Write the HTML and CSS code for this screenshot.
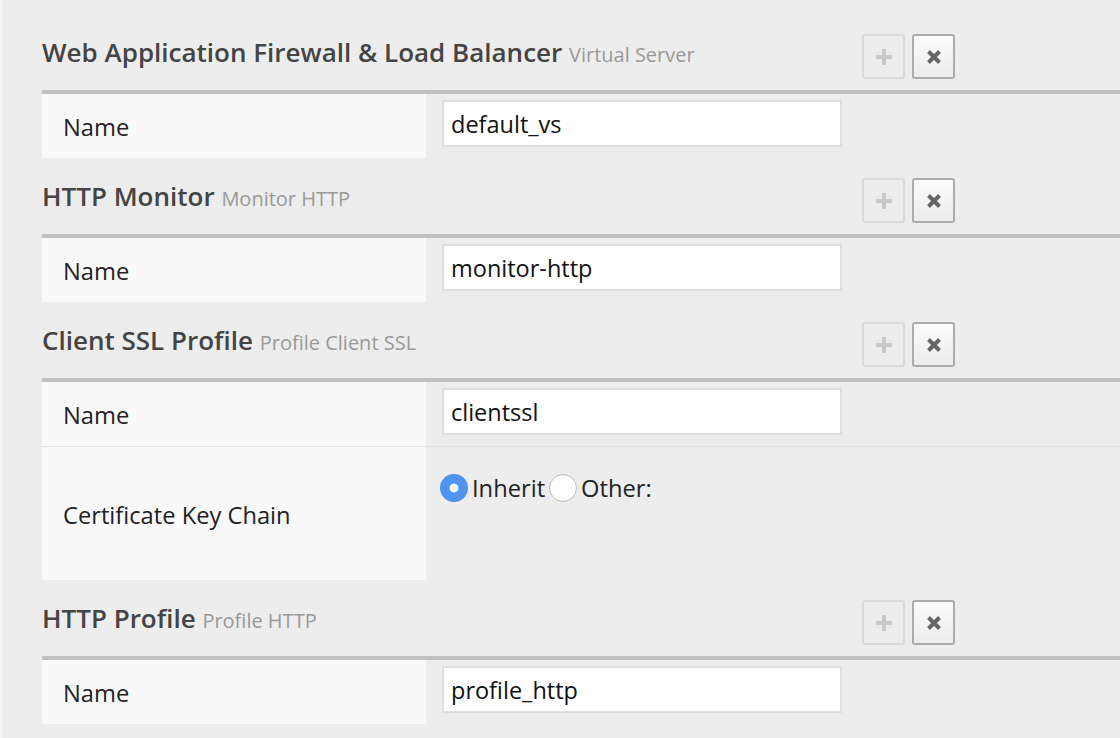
FILE: index.html
```html
<!DOCTYPE html>
<html>
<head>
<meta charset="utf-8">
<link rel="stylesheet" href="styles.css">
</head>
<body>
<div class="page">
  <section class="block">
    <div class="block-head">
      <h2 class="title">Web Application Firewall &amp; Load Balancer <span class="sub">Virtual Server</span></h2>
      <div class="actions">
        <button class="btn btn-add" disabled><svg width="16" height="16" viewBox="0 0 16 16"><path d="M8 0v16M0 8h16" stroke="currentColor" stroke-width="4"/></svg></button>
        <button class="btn btn-del"><svg width="14" height="14" viewBox="0 0 14 14"><path d="M1.5 1.5l11 11M12.5 1.5l-11 11" stroke="currentColor" stroke-width="4"/></svg></button>
      </div>
    </div>
    <div class="rows">
      <div class="row"><div class="label">Name</div><div class="value"><input class="field" type="text" value="default_vs"></div></div>
    </div>
  </section>

  <section class="block">
    <div class="block-head">
      <h2 class="title">HTTP Monitor <span class="sub">Monitor HTTP</span></h2>
      <div class="actions">
        <button class="btn btn-add" disabled><svg width="16" height="16" viewBox="0 0 16 16"><path d="M8 0v16M0 8h16" stroke="currentColor" stroke-width="4"/></svg></button>
        <button class="btn btn-del"><svg width="14" height="14" viewBox="0 0 14 14"><path d="M1.5 1.5l11 11M12.5 1.5l-11 11" stroke="currentColor" stroke-width="4"/></svg></button>
      </div>
    </div>
    <div class="rows">
      <div class="row"><div class="label">Name</div><div class="value"><input class="field" type="text" value="monitor-http"></div></div>
    </div>
  </section>

  <section class="block">
    <div class="block-head">
      <h2 class="title">Client SSL Profile <span class="sub">Profile Client SSL</span></h2>
      <div class="actions">
        <button class="btn btn-add" disabled><svg width="16" height="16" viewBox="0 0 16 16"><path d="M8 0v16M0 8h16" stroke="currentColor" stroke-width="4"/></svg></button>
        <button class="btn btn-del"><svg width="14" height="14" viewBox="0 0 14 14"><path d="M1.5 1.5l11 11M12.5 1.5l-11 11" stroke="currentColor" stroke-width="4"/></svg></button>
      </div>
    </div>
    <div class="rows">
      <div class="row row-sep"><div class="label">Name</div><div class="value"><input class="field" type="text" value="clientssl"></div></div>
      <div class="row row-tall"><div class="label">Certificate Key Chain</div>
        <div class="value">
          <div class="radios">
            <label class="radio"><input type="radio" name="ckc" checked><span>Inherit</span></label>
            <label class="radio"><input type="radio" name="ckc"><span>Other:</span></label>
          </div>
        </div>
      </div>
    </div>
  </section>

  <section class="block">
    <div class="block-head">
      <h2 class="title">HTTP Profile <span class="sub">Profile HTTP</span></h2>
      <div class="actions">
        <button class="btn btn-add" disabled><svg width="16" height="16" viewBox="0 0 16 16"><path d="M8 0v16M0 8h16" stroke="currentColor" stroke-width="4"/></svg></button>
        <button class="btn btn-del"><svg width="14" height="14" viewBox="0 0 14 14"><path d="M1.5 1.5l11 11M12.5 1.5l-11 11" stroke="currentColor" stroke-width="4"/></svg></button>
      </div>
    </div>
    <div class="rows">
      <div class="row"><div class="label">Name</div><div class="value"><input class="field" type="text" value="profile_http"></div></div>
    </div>
  </section>
</div>
</body>
</html>
```

FILE: styles.css
```css
html, body {
  margin: 0;
  padding: 0;
  background: #ededed;
  overflow: hidden;
}
body {
  font-family: "Open Sans", "Liberation Sans", sans-serif;
  color: #222;
}
.page {
  border-left: 2px solid #f4f4f4;
  padding: 14px 0 0 40px;
  height: 738px;
  box-sizing: border-box;
}
.block-head {
  display: flex;
  align-items: center;
  padding-top: 20px;
  padding-bottom: 11px;
}
.title {
  flex: 0 0 820px;
  margin: 0;
  font-size: 26px;
  font-weight: 600;
  color: #444;
  line-height: 32px;
  position: relative;
  top: -3px;
  white-space: nowrap;
}
.sub {
  font-size: 20px;
  font-weight: 400;
  color: #999;
}
.actions {
  display: flex;
  gap: 7px;
}
.btn {
  width: 43px;
  height: 45px;
  box-sizing: border-box;
  border-radius: 3px;
  display: flex;
  align-items: center;
  justify-content: center;
  padding: 0;
  font: inherit;
}
.btn-add {
  border: 2px solid #d9d9d9;
  background: #ededed;
  color: #c8c8c8;
}
.btn-del {
  border: 2px solid #ababab;
  background: linear-gradient(#fbfbfb, #ececec);
  color: #666;
}
.rows {
  border-top: 4px solid #c1c1c1;
}
.row {
  display: flex;
  height: 64px;
}
.row-sep {
  border-bottom: 1px solid #e2e2e2;
}
.row-tall {
  height: 133px;
}
.label {
  flex: 0 0 384px;
  box-sizing: border-box;
  background: #f9f9f9;
  padding: 2px 0 0 21px;
  display: flex;
  align-items: center;
  font-size: 23.7px;
  color: #222;
}
.value {
  flex: 1;
  padding: 6px 0 0 16px;
}
.field {
  width: 400px;
  height: 47px;
  box-sizing: border-box;
  border: 2px solid #dedede;
  background: #fff;
  padding: 1px 7px 0;
  font-family: "Open Sans", "Liberation Sans", sans-serif;
  font-size: 23.5px;
  color: #111;
  outline: none;
}
.radios {
  display: flex;
  align-items: center;
  padding: 19px 0 0 0;
  margin-left: -2px;
}
.radio {
  display: flex;
  align-items: center;
  font-size: 23.7px;
  color: #222;
}
.radio input {
  appearance: none;
  -webkit-appearance: none;
  margin: 0 4px 0 0;
  width: 28px;
  height: 28px;
  border-radius: 50%;
  border: 1px solid #b9b9b9;
  background: #fff;
  box-sizing: border-box;
}
.radio input:checked {
  border: none;
  background: radial-gradient(circle, #fff 0 4px, #4f95f0 4.8px);
}
.radio span {
  margin-right: 4px;
}
```
